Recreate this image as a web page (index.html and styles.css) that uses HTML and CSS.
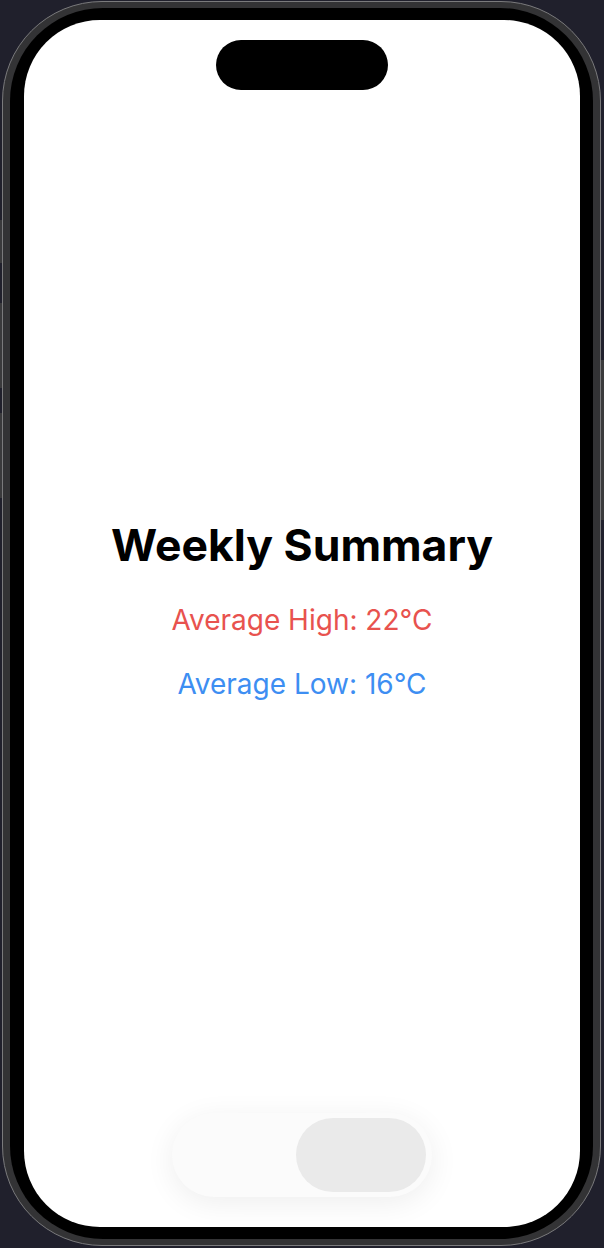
FILE: index.html
```html
<!DOCTYPE html>
<html lang="en">
<head>
<meta charset="utf-8">
<title>Weekly Summary</title>
<link rel="stylesheet" href="styles.css">
</head>
<body>
  <span class="side-btn btn-action"></span>
  <span class="side-btn btn-vol-up"></span>
  <span class="side-btn btn-vol-down"></span>
  <span class="side-btn btn-power"></span>
  <div class="device">
    <div class="bezel">
      <div class="screen">
        <div class="island"></div>
        <div class="summary">
          <h1 class="title">Weekly Summary</h1>
          <p class="stat stat-high">Average High: 22°C</p>
          <p class="stat stat-low">Average Low: 16°C</p>
        </div>
        <div class="toggle">
          <div class="knob"></div>
        </div>
      </div>
    </div>
  </div>
</body>
</html>
```
FILE: styles.css
```css
* { box-sizing: border-box; }

html, body {
  margin: 0;
  padding: 0;
}

body {
  width: 604px;
  height: 1248px;
  background: #20202c;
  position: relative;
  overflow: hidden;
  padding: 1px 3px 2px 2px;
  font-family: Inter, "Noto Sans", sans-serif;
}

.side-btn {
  position: absolute;
  width: 3px;
  background: #3a3a3c;
}
.btn-action { left: 0; top: 220px; height: 43px; }
.btn-vol-up { left: 0; top: 303px; height: 85px; }
.btn-vol-down { left: 0; top: 413px; height: 85px; }
.btn-power { right: 0; top: 360px; height: 160px; }

.device {
  position: relative;
  width: 599px;
  height: 1245px;
  border: 1px solid #7a7a7c;
  border-radius: 100px;
  background: #333335;
  padding: 6px 7px 6px 7px;
}

.bezel {
  width: 100%;
  height: 100%;
  background: #000;
  border-radius: 93px;
  padding: 12px 13px 12px 14px;
}

.screen {
  width: 100%;
  height: 100%;
  background: #fff;
  border-radius: 76px;
  display: flex;
  flex-direction: column;
  align-items: center;
}

.island {
  margin-top: 20px;
  width: 172px;
  height: 50px;
  border-radius: 25px;
  background: #000;
  flex: none;
}

.summary {
  margin-top: 429px;
  display: flex;
  flex-direction: column;
  align-items: center;
}

.title {
  margin: 0;
  font-size: 44.5px;
  font-weight: 700;
  line-height: 53px;
  color: #000;
  letter-spacing: 0;
}

.stat {
  margin: 0;
  font-size: 28px;
  font-weight: 400;
  line-height: 36px;
}

.stat-high {
  margin-top: 30px;
  color: #e8524e;
}

.stat-low {
  margin-top: 28px;
  color: #3d8ef2;
}

.toggle {
  margin-top: auto;
  margin-bottom: 30px;
  width: 260px;
  height: 84px;
  border-radius: 42px;
  background: #fbfbfb;
  box-shadow: 0 6px 30px rgba(0, 0, 0, 0.07);
  display: flex;
  justify-content: flex-end;
  align-items: center;
  padding: 5px 6px;
}

.knob {
  width: 130px;
  height: 74px;
  border-radius: 37px;
  background: #eaeaea;
}
```
